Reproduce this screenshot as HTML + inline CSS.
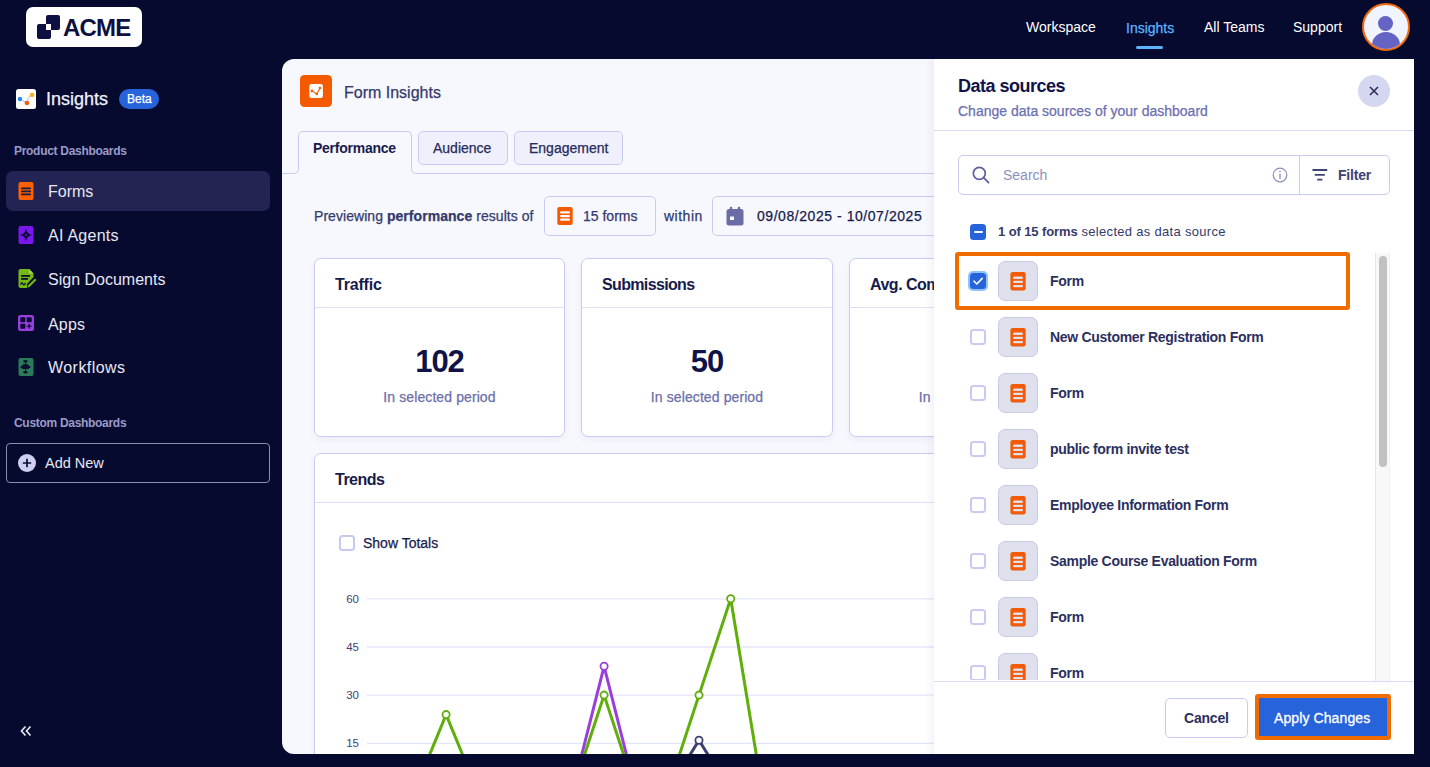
<!DOCTYPE html>
<html><head><meta charset="utf-8">
<style>
*{box-sizing:border-box;margin:0;padding:0}
html,body{width:1430px;height:767px;overflow:hidden;background:#070a2f;font-family:"Liberation Sans",sans-serif}
.a{position:absolute}
.t{position:absolute;line-height:1;white-space:nowrap}
.m{-webkit-text-stroke:0.25px currentColor}
</style></head><body>
<!-- ===== TOP BAR ===== -->
<div class="a" style="left:26px;top:7px;width:116px;height:40px;background:#fff;border-radius:7px"></div>
<div class="a" style="left:37px;top:24px;width:14px;height:15px;background:#0d1040;border-radius:2px"></div>
<div class="a" style="left:46px;top:15px;width:14px;height:15px;background:#0d1040;border-radius:2px"></div>
<div class="a" style="left:46px;top:24px;width:5px;height:6px;background:#fff"></div>
<div class="t" style="left:63px;top:15.6px;font-size:24px;font-weight:700;color:#0d1040;letter-spacing:-0.8px">ACME</div>

<div class="t" style="left:1026px;top:20px;font-size:14px;color:#fff">Workspace</div>
<div class="t m" style="left:1126px;top:20.5px;font-size:14px;color:#5ab4ff">Insights</div>
<div class="a" style="left:1136px;top:46px;width:27px;height:3px;background:#5ab4ff;border-radius:2px"></div>
<div class="t" style="left:1204px;top:20px;font-size:14px;color:#fff">All Teams</div>
<div class="t" style="left:1293px;top:20px;font-size:14px;color:#fff">Support</div>
<div class="a" style="left:1362px;top:3px;width:48px;height:48px;border-radius:50%;border:2.5px solid #ee6a0e;background:#f0f4ff;overflow:hidden">
  <div class="a" style="left:14px;top:10.5px;width:15px;height:15px;border-radius:50%;background:#6563c4"></div>
  <div class="a" style="left:7.5px;top:26.5px;width:28px;height:26px;border-radius:50%;background:#6563c4"></div>
</div>

<!-- ===== SIDEBAR ===== -->
<svg class="a" style="left:16px;top:89px" width="20" height="20" viewBox="0 0 20 20">
  <rect width="20" height="20" rx="2.5" fill="#fff"/>
  <path d="M4 10 L11 14 Q11.5 8 16 6" stroke="#c9c9f2" stroke-width="1.2" fill="none"/>
  <circle cx="4" cy="10" r="2.2" fill="#1e88ff"/>
  <circle cx="10.9" cy="14" r="2.3" fill="#f55a0a"/>
  <circle cx="16" cy="6" r="2.3" fill="#f5b01c"/>
</svg>
<div class="t m" style="left:46px;top:90px;font-size:18px;color:#f1f2fa">Insights</div>
<div class="a" style="left:119px;top:89px;width:40px;height:20px;border-radius:10px;background:#2764dc"></div>
<div class="t m" style="left:127px;top:93px;font-size:12px;color:#fff">Beta</div>
<div class="t" style="left:14px;top:145px;font-size:12px;font-weight:700;color:#9a9bc9;letter-spacing:-0.3px">Product Dashboards</div>

<div class="a" style="left:6px;top:171px;width:264px;height:40px;border-radius:7px;background:#232453"></div>
<svg class="a" style="left:18px;top:182px" width="16" height="18" viewBox="0 0 16 18">
  <rect x="0.5" width="15" height="18" rx="2" fill="#ff6100"/>
  <rect x="3" y="5.6" width="10" height="1.7" rx="0.5" fill="#1b1d45"/>
  <rect x="3" y="8.6" width="10" height="1.7" rx="0.5" fill="#1b1d45"/>
  <rect x="3" y="11.6" width="10" height="1.7" rx="0.5" fill="#1b1d45"/>
</svg>
<div class="t" style="left:48px;top:184px;font-size:16px;color:#e6e7f4">Forms</div>

<svg class="a" style="left:18px;top:226px" width="16" height="18" viewBox="0 0 16 18">
  <rect x="0.5" width="15" height="18" rx="2" fill="#7a17ef"/>
  <path d="M8 2.2 Q8.7 8.3 14.2 9 Q8.7 9.7 8 15.8 Q7.3 9.7 1.8 9 Q7.3 8.3 8 2.2Z" fill="#0b0c34"/>
  <circle cx="8" cy="9" r="0.9" fill="#7a17ef"/>
</svg>
<div class="t" style="left:48px;top:228px;font-size:16px;color:#e6e7f4;letter-spacing:0.25px">AI Agents</div>

<svg class="a" style="left:18px;top:269px" width="19" height="19" viewBox="0 0 19 19">
  <path d="M2.5 0 H11 L15.5 4.5 V8 L9 15 V19 H2.5 Q0.5 19 0.5 17 V2 Q0.5 0 2.5 0Z" fill="#74b816"/>
  <path d="M11 0 V4.5 H15.5Z" fill="#a7d35a"/>
  <rect x="3" y="6" width="9" height="1.8" fill="#0b0c34"/>
  <rect x="3" y="9" width="7" height="1.8" fill="#0b0c34"/>
  <path d="M2.5 15.5 Q4 12.5 5 15 Q6 17 7.5 14" stroke="#0b0c34" stroke-width="1.3" fill="none"/>
  <path d="M10 16.5 L17 9.5 L18.5 11 L11.5 18 L9.5 18.5Z" fill="#74b816"/>
</svg>
<div class="t" style="left:48px;top:272px;font-size:16px;color:#e6e7f4">Sign Documents</div>

<svg class="a" style="left:18px;top:315px" width="16" height="16" viewBox="0 0 16 16">
  <rect width="16" height="16" rx="2.5" fill="#9b3ee0"/>
  <rect x="2.3" y="2.3" width="5" height="5" rx="0.8" fill="#0b0c34"/>
  <rect x="8.7" y="2.3" width="5" height="5" rx="0.8" fill="#0b0c34"/>
  <rect x="2.3" y="8.7" width="5" height="5" rx="0.8" fill="#0b0c34"/>
  <path d="M11.2 8.8 V13.6 M8.8 11.2 H13.6" stroke="#0b0c34" stroke-width="1.3"/>
</svg>
<div class="t" style="left:48px;top:317px;font-size:16px;color:#e6e7f4;letter-spacing:0.2px">Apps</div>

<svg class="a" style="left:18px;top:358px" width="16" height="18" viewBox="0 0 16 18">
  <rect x="0.5" width="15" height="18" rx="2" fill="#2b7b58"/>
  <ellipse cx="7.5" cy="3.3" rx="2.3" ry="1.2" fill="#0b0c34"/>
  <rect x="7" y="4" width="1" height="3" fill="#0b0c34"/>
  <path d="M2 9 L4.8 7 H10.2 L13 9 L10.2 11 H4.8Z" fill="#0b0c34"/>
  <rect x="5" y="6.3" width="5" height="1.2" fill="#0b0c34"/>
  <rect x="7" y="10.8" width="1" height="2.5" fill="#0b0c34"/>
  <ellipse cx="7.5" cy="14.3" rx="2.3" ry="1.2" fill="#0b0c34"/>
</svg>
<div class="t" style="left:48px;top:360px;font-size:16px;color:#e6e7f4;letter-spacing:0.45px">Workflows</div>

<div class="t" style="left:14px;top:417px;font-size:12px;font-weight:700;color:#9a9bc9;letter-spacing:-0.3px">Custom Dashboards</div>
<div class="a" style="left:6px;top:443px;width:264px;height:40px;border-radius:4px;border:1px solid #8e8faf"></div>
<svg class="a" style="left:18px;top:454px" width="18" height="18" viewBox="0 0 18 18">
  <circle cx="9" cy="9" r="9" fill="#cfd0f1"/>
  <path d="M9 4.8 V13.2 M4.8 9 H13.2" stroke="#0b0c34" stroke-width="1.7"/>
</svg>
<div class="t" style="left:45px;top:456px;font-size:14.5px;color:#e6e7f4">Add New</div>
<svg class="a" style="left:19px;top:724px" width="14" height="14" viewBox="0 0 14 14">
  <path d="M6.5 2.5 L2.5 7 L6.5 11.5 M11.5 2.5 L7.5 7 L11.5 11.5" stroke="#e6e7f4" stroke-width="1.7" fill="none"/>
</svg>

<!-- ===== MAIN PANEL ===== -->
<div class="a" style="left:282px;top:59px;width:1132px;height:695px;background:#f7f8fe;border-radius:12px"></div>
<div class="a" style="left:0;top:0;width:934px;height:754px;overflow:hidden">
  <!-- header -->
  <svg class="a" style="left:300px;top:75px" width="32" height="32" viewBox="0 0 32 32">
    <rect width="32" height="32" rx="4.5" fill="#f45a00"/>
    <rect x="9.3" y="9.1" width="13.6" height="13.8" rx="2" fill="#fff"/>
    <path d="M11.9 15.9 L16.8 19 L20 13" stroke="#f45a00" stroke-width="1.1" fill="none"/>
    <circle cx="11.9" cy="15.9" r="1.3" fill="#f45a00"/>
    <circle cx="16.8" cy="19" r="1.3" fill="#f45a00"/>
    <circle cx="20" cy="13" r="1.3" fill="#f45a00"/>
  </svg>
  <div class="t m" style="left:344px;top:85px;font-size:16px;color:#343a6b">Form Insights</div>
  <!-- tabs -->
  <div class="a" style="left:298px;top:131px;width:114px;height:30px;border:1px solid #c8cbf2;border-bottom:none;border-radius:5px 5px 0 0;background:#f7f8fe"></div>
  <div class="a" style="left:282px;top:150px;width:17px;height:24px;border-right:1px solid #c8cbf2;border-bottom:1px solid #c8cbf2;border-bottom-right-radius:5px"></div>
  <div class="a" style="left:411px;top:150px;width:540px;height:24px;border-left:1px solid #c8cbf2;border-bottom:1px solid #c8cbf2;border-bottom-left-radius:5px"></div>
  <div class="t" style="left:313px;top:141px;font-size:14px;font-weight:700;color:#171b4b;letter-spacing:-0.25px">Performance</div>
  <div class="a" style="left:418px;top:131px;width:90px;height:34px;border:1px solid #c8cbf2;border-radius:5px;background:#f0f0fd"></div>
  <div class="t m" style="left:433px;top:141px;font-size:14px;color:#252a5a">Audience</div>
  <div class="a" style="left:514px;top:131px;width:109px;height:34px;border:1px solid #c8cbf2;border-radius:5px;background:#f0f0fd"></div>
  <div class="t m" style="left:529px;top:141px;font-size:14px;color:#252a5a">Engagement</div>
  <!-- filter row -->
  <div class="t m" style="left:314px;top:208.7px;font-size:14px;color:#343a6b;letter-spacing:0.05px">Previewing <b>performance</b> results of</div>
  <div class="a" style="left:544px;top:196px;width:112px;height:40px;border:1px solid #c8cbf2;border-radius:5px"></div>
  <svg class="a" style="left:557px;top:207px" width="16" height="18" viewBox="0 0 16 18">
    <rect x="0.3" width="15.4" height="18" rx="2.2" fill="#f45a00"/>
    <rect x="3" y="4.3" width="10" height="2.3" rx="1.1" fill="#f7f8fe"/>
    <rect x="3" y="7.9" width="10" height="2.3" rx="1.1" fill="#f7f8fe"/>
    <rect x="3" y="11.5" width="10" height="2.3" rx="1.1" fill="#f7f8fe"/>
  </svg>
  <div class="t m" style="left:583px;top:208.7px;font-size:14px;color:#343a6b">15 forms</div>
  <div class="t m" style="left:664px;top:208.7px;font-size:14px;color:#343a6b;letter-spacing:0.5px">within</div>
  <div class="a" style="left:712px;top:196px;width:300px;height:40px;border:1px solid #c8cbf2;border-radius:5px"></div>
  <svg class="a" style="left:726px;top:206px" width="18" height="20" viewBox="0 0 18 20">
    <rect x="0.5" y="3" width="17" height="16.5" rx="2.5" fill="#6a6ca6"/>
    <rect x="3.8" y="0.8" width="2.4" height="4.5" rx="1" fill="#6a6ca6"/>
    <rect x="11.8" y="0.8" width="2.4" height="4.5" rx="1" fill="#6a6ca6"/>
        <rect x="4" y="10.5" width="4" height="3.5" fill="#f7f8fe"/>
  </svg>
  <div class="t m" style="left:757px;top:208.7px;font-size:14px;color:#171b4b;letter-spacing:0.55px">09/08/2025 - 10/07/2025</div>
  <!-- cards -->
  <div class="a" style="left:314px;top:258px;width:251px;height:179px;border:1px solid #c8cbf2;border-radius:7px;background:#fff;box-shadow:0 3px 6px rgba(40,40,110,0.05)"></div>
  <div class="a" style="left:315px;top:307px;width:249px;height:1px;background:#dfe1f6"></div>
  <div class="t" style="left:335px;top:277px;font-size:16px;font-weight:700;color:#171b4b;letter-spacing:-0.2px">Traffic</div>
  <div class="t" style="left:314px;width:251px;text-align:center;top:346px;font-size:31px;font-weight:700;color:#10134a;letter-spacing:-1.1px">102</div>
  <div class="t m" style="left:314px;width:251px;text-align:center;top:390px;font-size:14px;color:#6b6fa8;letter-spacing:0.1px">In selected period</div>

  <div class="a" style="left:581px;top:258px;width:252px;height:179px;border:1px solid #c8cbf2;border-radius:7px;background:#fff;box-shadow:0 3px 6px rgba(40,40,110,0.05)"></div>
  <div class="a" style="left:582px;top:307px;width:250px;height:1px;background:#dfe1f6"></div>
  <div class="t" style="left:602px;top:277px;font-size:16px;font-weight:700;color:#171b4b;letter-spacing:-0.65px">Submissions</div>
  <div class="t" style="left:581px;width:252px;text-align:center;top:346px;font-size:31px;font-weight:700;color:#10134a;letter-spacing:-1.1px">50</div>
  <div class="t m" style="left:581px;width:252px;text-align:center;top:390px;font-size:14px;color:#6b6fa8;letter-spacing:0.1px">In selected period</div>

  <div class="a" style="left:849px;top:258px;width:252px;height:179px;border:1px solid #c8cbf2;border-radius:7px;background:#fff;box-shadow:0 3px 6px rgba(40,40,110,0.05)"></div>
  <div class="a" style="left:850px;top:307px;width:250px;height:1px;background:#dfe1f6"></div>
  <div class="t" style="left:870px;top:277px;font-size:16px;font-weight:700;color:#171b4b;letter-spacing:-0.5px">Avg. Completion</div>
  <div class="t m" style="left:849px;width:252px;text-align:center;top:390px;font-size:14px;color:#6b6fa8;letter-spacing:0.1px">In selected period</div>

  <!-- trends -->
  <div class="a" style="left:314px;top:453px;width:800px;height:400px;border:1px solid #c8cbf2;border-radius:7px;background:#fff;box-shadow:0 3px 6px rgba(40,40,110,0.05)"></div>
  <div class="a" style="left:315px;top:502px;width:798px;height:1px;background:#dfe1f6"></div>
  <div class="t" style="left:335px;top:471.5px;font-size:16px;font-weight:700;color:#171b4b;letter-spacing:-0.5px">Trends</div>
  <div class="a" style="left:339px;top:535px;width:16px;height:16px;border:2px solid #c6c9ee;border-radius:3.5px;background:#fff"></div>
  <div class="t m" style="left:363px;top:536px;font-size:14px;color:#171b4b">Show Totals</div>
  <svg class="a" style="left:314px;top:560px" width="620" height="200" viewBox="314 560 620 200">
    <g stroke="#e4e5f8" stroke-width="1.3">
      <line x1="367" y1="598.8" x2="934" y2="598.8"/>
      <line x1="367" y1="647" x2="934" y2="647"/>
      <line x1="367" y1="695.2" x2="934" y2="695.2"/>
      <line x1="367" y1="743.4" x2="934" y2="743.4"/>
    </g>
    <g font-family="Liberation Sans" font-size="11.5" fill="#3e4373" text-anchor="end">
      <text x="359" y="602.8">60</text>
      <text x="359" y="651">45</text>
      <text x="359" y="699.2">30</text>
      <text x="359" y="747.4">15</text>
    </g>
    <g fill="none" stroke-width="3" stroke-linejoin="round">
      <polyline stroke="#9a3fdc" points="572.4,791.7 604.1,666.3 635.8,791.7"/>
      <polyline stroke="#3b3f73" points="667.3,791.7 699,740.2 730.7,791.7"/>
      <polyline stroke="#5fae0a" points="414.4,791.7 446.1,714.6 477.8,791.7"/>
      <polyline stroke="#5fae0a" points="572.4,791.7 604.1,695.1 635.8,791.7"/>
      <polyline stroke="#5fae0a" points="667.3,791.7 699,695.1 730.7,598.8 762.4,791.7"/>
    </g>
    <g fill="#fff" stroke-width="1.8">
      <circle cx="604.1" cy="666.3" r="3.6" stroke="#9a3fdc"/>
      <circle cx="699" cy="740.2" r="3.6" stroke="#3b3f73"/>
      <circle cx="446.1" cy="714.6" r="3.6" stroke="#5fae0a"/>
      <circle cx="604.1" cy="695.1" r="3.6" stroke="#5fae0a"/>
      <circle cx="699" cy="695.1" r="3.6" stroke="#5fae0a"/>
      <circle cx="730.7" cy="598.8" r="3.6" stroke="#5fae0a"/>
    </g>
  </svg>
</div>
<!-- drawer shadow -->
<div class="a" style="left:925px;top:59px;width:9px;height:695px;background:linear-gradient(to right,rgba(90,90,150,0),rgba(90,90,150,0.045) 70%,rgba(90,90,150,0.06))"></div>
<div class="a" style="left:934px;top:59px;width:480px;height:695px;background:#fff;overflow:hidden">
  <div class="t" style="left:24px;top:17.5px;font-size:18px;font-weight:700;color:#10134a;letter-spacing:-0.5px">Data sources</div>
  <div class="t m" style="left:24px;top:44.5px;font-size:14px;color:#6b6fb0">Change data sources of your dashboard</div>
  <div class="a" style="left:424px;top:16px;width:32px;height:32px;border-radius:50%;background:#d5d7f1"></div>
  <svg class="a" style="left:435px;top:27px" width="10" height="10" viewBox="0 0 10 10">
    <path d="M1 1 L9 9 M9 1 L1 9" stroke="#2a2e5c" stroke-width="1.6"/>
  </svg>
  <div class="a" style="left:0;top:71px;width:480px;height:1px;background:#d9dbf5"></div>
  <!-- search -->
  <div class="a" style="left:24px;top:96px;width:432px;height:40px;border:1px solid #c8cbf2;border-radius:5px"></div>
  <div class="a" style="left:365px;top:97px;width:1px;height:38px;background:#c8cbf2"></div>
  <svg class="a" style="left:38px;top:107px" width="18" height="18" viewBox="0 0 18 18">
    <circle cx="7.3" cy="7.3" r="6" stroke="#5b5f9b" stroke-width="1.7" fill="none"/>
    <path d="M11.6 11.6 L16.6 16.6" stroke="#5b5f9b" stroke-width="1.7" stroke-linecap="round"/>
  </svg>
  <div class="t" style="left:69px;top:109.4px;font-size:14px;color:#8b8fc0">Search</div>
  <svg class="a" style="left:338px;top:108px" width="16" height="16" viewBox="0 0 16 16">
    <circle cx="8" cy="8" r="6.8" stroke="#8b8fc0" stroke-width="1.2" fill="none"/>
    <rect x="7.3" y="6.8" width="1.4" height="5" fill="#8b8fc0"/>
    <circle cx="8" cy="4.7" r="0.8" fill="#8b8fc0"/>
  </svg>
  <svg class="a" style="left:378px;top:110px" width="16" height="12" viewBox="0 0 16 12">
    <path d="M0.5 1 H15.2 M2.8 5.8 H12.8 M5.2 10.6 H10.4" stroke="#3e4373" stroke-width="1.8"/>
  </svg>
  <div class="t" style="left:404px;top:109px;font-size:14px;font-weight:700;color:#3e4373;letter-spacing:-0.2px">Filter</div>
  <!-- select all -->
  <div class="a" style="left:36px;top:165px;width:16px;height:16px;border-radius:3.5px;background:#2764dc"></div>
  <div class="a" style="left:39.5px;top:172px;width:9px;height:2px;background:#fff;border-radius:1px"></div>
  <div class="t" style="left:64px;top:166px;font-size:13px;color:#343a6b;letter-spacing:0.3px"><b style="letter-spacing:-0.1px">1 of 15 forms</b> selected as data source</div>
  <!-- list -->
  <div class="a" style="left:0;top:193px;width:441px;height:428px;overflow:hidden">
<div class="a" style="left:21px;top:0;width:395px;height:58px;border:4px solid #f06c00;border-radius:3px"></div>
<div class="a" style="left:34px;top:19px;width:20px;height:20px;border-radius:5px;background:#8ec3ff"></div>
<div class="a" style="left:36px;top:21px;width:16px;height:16px;border-radius:3.5px;background:#2764dc"></div>
<svg class="a" style="left:36px;top:21px" width="16" height="16" viewBox="0 0 16 16"><path d="M4 8.2 L6.9 11 L12.2 5.4" stroke="#fff" stroke-width="1.6" fill="none" stroke-linecap="round" stroke-linejoin="round"/></svg>
<div class="a" style="left:64px;top:9px;width:40px;height:40px;border-radius:7px;border:1px solid #c9cbe2;background:#dfe0ee"></div>
<svg class="a" style="left:76px;top:19.5px" width="16" height="19" viewBox="0 0 16 19"><rect x="0.4" y="0" width="15.3" height="18.6" rx="2.3" fill="#f25a05"/><rect x="3" y="4.5" width="10" height="2.4" rx="1.2" fill="#dfe0ee"/><rect x="3" y="8.7" width="10" height="2.4" rx="1.2" fill="#dfe0ee"/><rect x="3" y="12.9" width="10" height="2.4" rx="1.2" fill="#dfe0ee"/></svg>
<div class="t" style="left:116px;top:22.1px;font-size:14px;font-weight:700;color:#2b2f5e;letter-spacing:-0.3px">Form</div>
<div class="a" style="left:36px;top:77px;width:16px;height:16px;border-radius:3.5px;border:2px solid #c7cbf3;background:#fff"></div>
<div class="a" style="left:64px;top:65px;width:40px;height:40px;border-radius:7px;border:1px solid #c9cbe2;background:#dfe0ee"></div>
<svg class="a" style="left:76px;top:75.5px" width="16" height="19" viewBox="0 0 16 19"><rect x="0.4" y="0" width="15.3" height="18.6" rx="2.3" fill="#f25a05"/><rect x="3" y="4.5" width="10" height="2.4" rx="1.2" fill="#dfe0ee"/><rect x="3" y="8.7" width="10" height="2.4" rx="1.2" fill="#dfe0ee"/><rect x="3" y="12.9" width="10" height="2.4" rx="1.2" fill="#dfe0ee"/></svg>
<div class="t" style="left:116px;top:78.1px;font-size:14px;font-weight:700;color:#2b2f5e;letter-spacing:-0.3px">New Customer Registration Form</div>
<div class="a" style="left:36px;top:133px;width:16px;height:16px;border-radius:3.5px;border:2px solid #c7cbf3;background:#fff"></div>
<div class="a" style="left:64px;top:121px;width:40px;height:40px;border-radius:7px;border:1px solid #c9cbe2;background:#dfe0ee"></div>
<svg class="a" style="left:76px;top:131.5px" width="16" height="19" viewBox="0 0 16 19"><rect x="0.4" y="0" width="15.3" height="18.6" rx="2.3" fill="#f25a05"/><rect x="3" y="4.5" width="10" height="2.4" rx="1.2" fill="#dfe0ee"/><rect x="3" y="8.7" width="10" height="2.4" rx="1.2" fill="#dfe0ee"/><rect x="3" y="12.9" width="10" height="2.4" rx="1.2" fill="#dfe0ee"/></svg>
<div class="t" style="left:116px;top:134.1px;font-size:14px;font-weight:700;color:#2b2f5e;letter-spacing:-0.3px">Form</div>
<div class="a" style="left:36px;top:189px;width:16px;height:16px;border-radius:3.5px;border:2px solid #c7cbf3;background:#fff"></div>
<div class="a" style="left:64px;top:177px;width:40px;height:40px;border-radius:7px;border:1px solid #c9cbe2;background:#dfe0ee"></div>
<svg class="a" style="left:76px;top:187.5px" width="16" height="19" viewBox="0 0 16 19"><rect x="0.4" y="0" width="15.3" height="18.6" rx="2.3" fill="#f25a05"/><rect x="3" y="4.5" width="10" height="2.4" rx="1.2" fill="#dfe0ee"/><rect x="3" y="8.7" width="10" height="2.4" rx="1.2" fill="#dfe0ee"/><rect x="3" y="12.9" width="10" height="2.4" rx="1.2" fill="#dfe0ee"/></svg>
<div class="t" style="left:116px;top:190.1px;font-size:14px;font-weight:700;color:#2b2f5e;letter-spacing:-0.3px">public form invite test</div>
<div class="a" style="left:36px;top:245px;width:16px;height:16px;border-radius:3.5px;border:2px solid #c7cbf3;background:#fff"></div>
<div class="a" style="left:64px;top:233px;width:40px;height:40px;border-radius:7px;border:1px solid #c9cbe2;background:#dfe0ee"></div>
<svg class="a" style="left:76px;top:243.5px" width="16" height="19" viewBox="0 0 16 19"><rect x="0.4" y="0" width="15.3" height="18.6" rx="2.3" fill="#f25a05"/><rect x="3" y="4.5" width="10" height="2.4" rx="1.2" fill="#dfe0ee"/><rect x="3" y="8.7" width="10" height="2.4" rx="1.2" fill="#dfe0ee"/><rect x="3" y="12.9" width="10" height="2.4" rx="1.2" fill="#dfe0ee"/></svg>
<div class="t" style="left:116px;top:246.1px;font-size:14px;font-weight:700;color:#2b2f5e;letter-spacing:-0.3px">Employee Information Form</div>
<div class="a" style="left:36px;top:301px;width:16px;height:16px;border-radius:3.5px;border:2px solid #c7cbf3;background:#fff"></div>
<div class="a" style="left:64px;top:289px;width:40px;height:40px;border-radius:7px;border:1px solid #c9cbe2;background:#dfe0ee"></div>
<svg class="a" style="left:76px;top:299.5px" width="16" height="19" viewBox="0 0 16 19"><rect x="0.4" y="0" width="15.3" height="18.6" rx="2.3" fill="#f25a05"/><rect x="3" y="4.5" width="10" height="2.4" rx="1.2" fill="#dfe0ee"/><rect x="3" y="8.7" width="10" height="2.4" rx="1.2" fill="#dfe0ee"/><rect x="3" y="12.9" width="10" height="2.4" rx="1.2" fill="#dfe0ee"/></svg>
<div class="t" style="left:116px;top:302.1px;font-size:14px;font-weight:700;color:#2b2f5e;letter-spacing:-0.3px">Sample Course Evaluation Form</div>
<div class="a" style="left:36px;top:357px;width:16px;height:16px;border-radius:3.5px;border:2px solid #c7cbf3;background:#fff"></div>
<div class="a" style="left:64px;top:345px;width:40px;height:40px;border-radius:7px;border:1px solid #c9cbe2;background:#dfe0ee"></div>
<svg class="a" style="left:76px;top:355.5px" width="16" height="19" viewBox="0 0 16 19"><rect x="0.4" y="0" width="15.3" height="18.6" rx="2.3" fill="#f25a05"/><rect x="3" y="4.5" width="10" height="2.4" rx="1.2" fill="#dfe0ee"/><rect x="3" y="8.7" width="10" height="2.4" rx="1.2" fill="#dfe0ee"/><rect x="3" y="12.9" width="10" height="2.4" rx="1.2" fill="#dfe0ee"/></svg>
<div class="t" style="left:116px;top:358.1px;font-size:14px;font-weight:700;color:#2b2f5e;letter-spacing:-0.3px">Form</div>
<div class="a" style="left:36px;top:413px;width:16px;height:16px;border-radius:3.5px;border:2px solid #c7cbf3;background:#fff"></div>
<div class="a" style="left:64px;top:401px;width:40px;height:40px;border-radius:7px;border:1px solid #c9cbe2;background:#dfe0ee"></div>
<svg class="a" style="left:76px;top:411.5px" width="16" height="19" viewBox="0 0 16 19"><rect x="0.4" y="0" width="15.3" height="18.6" rx="2.3" fill="#f25a05"/><rect x="3" y="4.5" width="10" height="2.4" rx="1.2" fill="#dfe0ee"/><rect x="3" y="8.7" width="10" height="2.4" rx="1.2" fill="#dfe0ee"/><rect x="3" y="12.9" width="10" height="2.4" rx="1.2" fill="#dfe0ee"/></svg>
<div class="t" style="left:116px;top:414.1px;font-size:14px;font-weight:700;color:#2b2f5e;letter-spacing:-0.3px">Form</div>
</div>
  <!-- scrollbar -->
  <div class="a" style="left:441px;top:194px;width:15px;height:428px;background:#f8f8f8;border-left:1px solid #e6e6e6;border-right:1px solid #f0f0f0"></div>
  <div class="a" style="left:445px;top:197px;width:8px;height:211px;border-radius:4px;background:#c1c1c1"></div>
  <div class="a" style="left:0;top:622px;width:480px;height:1px;background:#d9dbf5"></div>
  <!-- footer -->
  <div class="a" style="left:231px;top:639px;width:83px;height:40px;border:1px solid #c8cbf2;border-radius:5px;background:#fff"></div>
  <div class="t" style="left:250px;top:652.3px;font-size:14px;font-weight:700;color:#2b2f5e;letter-spacing:-0.2px">Cancel</div>
  <div class="a" style="left:321px;top:635px;width:136px;height:46px;border:4px solid #f06c00;border-radius:3px;background:#2764dc"></div>
  <div class="t" style="left:340px;top:651.7px;font-size:14px;color:#fff;letter-spacing:0.1px;-webkit-text-stroke:0.3px #fff">Apply Changes</div>
</div>

</body></html>
